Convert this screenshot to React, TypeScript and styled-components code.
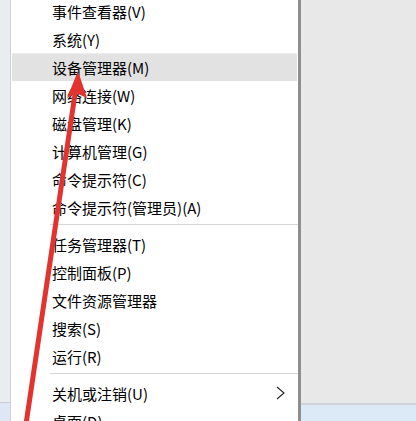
import React from 'react';
import styled, { createGlobalStyle } from 'styled-components';

const GlobalStyle = createGlobalStyle`
  html, body {
    margin: 0;
    padding: 0;
    background: #e8e8e8;
  }
  body {
    font-family: "Noto Sans CJK SC", "Noto Sans", sans-serif;
  }
`;

const Screen = styled.div`
  position: relative;
  display: flex;
  width: 416px;
  height: 421px;
  overflow: hidden;
`;

const LeftStrip = styled.div`
  display: flex;
  flex-direction: column;
  width: 10px;
  background: #e9edf2;
  border-right: 1px solid #cdd1d6;

  .strip__fill {
    flex: 1;
  }

  .strip__bar {
    height: 18px;
    border-top: 1px solid #c9ced4;
    background: #dde8f4;
  }
`;

const Menu = styled.div`
  width: 287px;
  background: #fff;
  border-right: 3px solid #8e8e8e;
  box-shadow: 1px 0 0 #b8b8b8;
`;

const MenuList = styled.ul`
  list-style: none;
  margin: -3px 0 0;
  padding: 0;
`;

const Item = styled.li<{ $active?: boolean }>`
  display: flex;
  align-items: center;
  justify-content: space-between;
  height: 28px;
  margin: 0 1px;
  padding: 0 12px 0 40px;
  font-size: 15px;
  color: #000;
  background: ${(p) => (p.$active ? '#e2e2e2' : 'transparent')};
  box-shadow: ${(p) => (p.$active ? 'inset 0 1px 0 #ececec' : 'none')};
  white-space: nowrap;
`;

const Separator = styled.li`
  height: 9px;
  display: flex;
  align-items: flex-start;
  padding-left: 39px;

  &::after {
    content: '';
    margin-top: 3px;
    flex: 1;
    height: 1px;
    background: #d6d6d6;
  }
`;

const SidePane = styled.div`
  flex: 1;
  display: flex;
  flex-direction: column;
  background: #e8e8e8;

  .side__fill {
    flex: 1;
  }

  .side__bar {
    height: 16px;
    border-top: 2px solid #cfd3d8;
    background: #dce9f7;
  }
`;

const Chevron = () => (
  <svg width="9" height="14" viewBox="0 0 9 14" fill="none">
    <path d="M1 1 L8 7 L1 13" stroke="#222" strokeWidth="1.1" />
  </svg>
);

const Arrow = styled.svg`
  position: absolute;
  left: 0;
  top: 0;
  pointer-events: none;
`;

type Entry = { label: string; active?: boolean; sub?: boolean } | 'sep';

const entries: Entry[] = [
  { label: '事件查看器(V)' },
  { label: '系统(Y)' },
  { label: '设备管理器(M)', active: true },
  { label: '网络连接(W)' },
  { label: '磁盘管理(K)' },
  { label: '计算机管理(G)' },
  { label: '命令提示符(C)' },
  { label: '命令提示符(管理员)(A)' },
  'sep',
  { label: '任务管理器(T)' },
  { label: '控制面板(P)' },
  { label: '文件资源管理器' },
  { label: '搜索(S)' },
  { label: '运行(R)' },
  'sep',
  { label: '关机或注销(U)', sub: true },
  { label: '桌面(D)' },
];

const App = () => {
  return (
    <>
      <GlobalStyle />
      <Screen>
        <LeftStrip>
          <div className="strip__fill" />
          <div className="strip__bar" />
        </LeftStrip>
        <Menu>
          <MenuList>
            {entries.map((e, i) =>
              e === 'sep' ? (
                <Separator key={i} />
              ) : (
                <Item key={i} $active={e.active}>
                  <span>{e.label}</span>
                  {e.sub && <Chevron />}
                </Item>
              ),
            )}
          </MenuList>
        </Menu>
        <SidePane>
          <div className="side__fill" />
          <div className="side__bar" />
        </SidePane>
        <Arrow width="416" height="421" viewBox="0 0 416 421">
          <path d="M26 424 L75 94" stroke="#e2332e" strokeWidth="5" strokeLinecap="round" />
          <path d="M78 71 L67 98 L76 93 L87 98 Z" fill="#e2332e" />
        </Arrow>
      </Screen>
    </>
  );
};

export default App;
